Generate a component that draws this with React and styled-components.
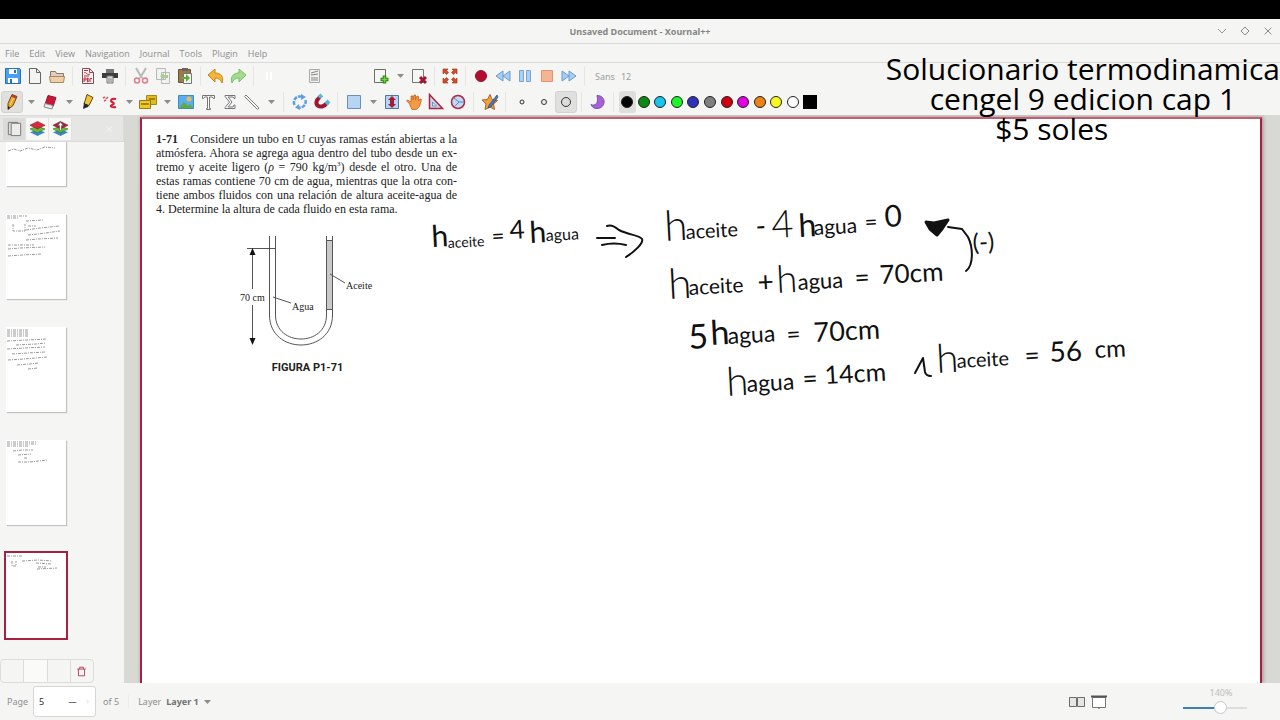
import React from 'react'
import styled, { createGlobalStyle, css } from 'styled-components'

const Chrome = "#f5f5f3";
const Line = "#d9dad8";
const Gutter = "#d8d8d4";
const Accent = "#a8203f";
const Muted = "#8d8f8e";
const Sans = "'Noto Sans', 'Open Sans', sans-serif";
const OpenSans = "'Open Sans', 'Noto Sans', sans-serif";
const Serif = "'Liberation Serif', serif";

const GlobalStyle = createGlobalStyle`
  * {
    box-sizing: border-box;
  }
  body {
    margin: 0;
    background: #000;
    font-family: ${Sans};
  }
  button, input, select {
    font-family: inherit;
    border: 0;
    padding: 0;
    margin: 0;
    background: none;
  }
`

const Window = styled.div`
  position: relative;
  display: flex;
  flex-direction: column;
  height: 100vh;
  padding-top: 19px;
  overflow: hidden;
`

const TitleBar = styled.header`
  display: grid;
  grid-template-columns: 1fr auto 1fr;
  align-items: center;
  height: 25px;
  flex: none;
  background: ${Chrome};
  border-bottom: 1px solid ${Line};
`

const Title = styled.h1`
  grid-column: 2;
  margin: 0;
  font-size: 9px;
  font-weight: 700;
  color: #858786;
`

const WindowButtons = styled.div`
  display: flex;
  justify-content: flex-end;
  gap: 7px;
  padding-right: 4px;
`

const WindowButton = styled.button`
  display: flex;
  align-items: center;
  justify-content: center;
  width: 16px;
  height: 16px;
`

const MenuBar = styled.nav`
  display: flex;
  align-items: center;
  gap: 10px;
  height: 19px;
  flex: none;
  padding-left: 5px;
  background: ${Chrome};
  border-bottom: 1px solid ${Line};
  font-family: ${OpenSans};
`

const MenuItem = styled.button`
  font-size: 9px;
  color: ${Muted};
`

const Toolbar = styled.div`
  display: flex;
  align-items: center;
  height: 26px;
  flex: none;
  padding-left: ${p => p.$start}px;
  background: ${Chrome};
`

const ToolButton = styled.button`
  display: flex;
  align-items: center;
  justify-content: center;
  width: 22px;
  height: 22px;
  border-radius: 3px;
  opacity: ${p => (p.$faded ? 0.65 : 1)};
  ${p => p.$active && css`
    background: #e0e0de;
    border: 1px solid #d2d2d0;
  `}
`

const CaretButton = styled.button`
  display: flex;
  align-items: center;
  justify-content: center;
  width: 16px;
  height: 22px;
`

const Separator = styled.span`
  width: 1px;
  height: 20px;
  margin: 0 ${p => (p.$wide ? 5 : 4)}px 0 4px;
  background: #e6e6e4;
`

const Space = styled.span`
  width: ${p => p.$size}px;
`

const FontButton = styled.button`
  display: flex;
  gap: 6px;
  margin-left: 6px;
  font-size: 9px;
  color: #9b9c9b;
`

const Swatches = styled.div`
  display: grid;
  grid-template-columns: repeat(11, 1fr);
  width: 182px;
`

const Swatch = styled.button`
  display: flex;
  align-items: center;
  justify-content: center;
  height: 22px;
  border-radius: 3px;
  ${p => p.$active && css`
    background: #dededc;
  `}
  &::before {
    content: '';
    width: 10px;
    height: 10px;
    border: 1px solid #222;
    border-radius: 50%;
    background: ${p => p.$color};
  }
`

const CurrentColor = styled.button`
  width: 14px;
  height: 14px;
  margin-left: 2px;
  background: #000;
`

const Main = styled.main`
  display: flex;
  flex: 1;
  min-height: 0;
  background: ${Gutter};
`

const Sidebar = styled.aside`
  display: flex;
  flex-direction: column;
  width: 124px;
  flex: none;
  background: ${Chrome};
`

const SidebarTabs = styled.div`
  display: flex;
  align-items: center;
  height: 27px;
  flex: none;
  padding: 0 8px 0 3px;
  background: #e6e6e4;
  border: 1px solid #dadad8;
  border-left: 0;
`

const SidebarTab = styled.button`
  display: flex;
  align-items: center;
  justify-content: center;
  width: 23px;
  height: 22px;
  background: ${p => (p.$active ? "#dbdbd9" : "#f7f7f6")};
  border-right: 1px solid #e2e2e0;
`

const SidebarClose = styled.button`
  display: flex;
  margin-left: auto;
`

const Thumbs = styled.div`
  display: flex;
  flex-direction: column;
  justify-content: flex-end;
  gap: 28px;
  flex: 1;
  min-height: 0;
  padding: 0 0 21px 6px;
  overflow: hidden;
`

const Thumb = styled.button`
  display: flex;
  flex: none;
  width: 60px;
  height: 85px;
  background: #fff;
  box-shadow: 1px 1px 1px #c2c2c0;
  ${p => p.$active && css`
    box-shadow: 0 0 0 2px ${Accent};
  `}
`

const PageActions = styled.div`
  display: flex;
  width: 94px;
  height: 24px;
  flex: none;
  border: 1px solid #dcdcda;
  border-radius: 4px;
`

const PageAction = styled.button`
  display: flex;
  flex: 1;
  align-items: center;
  justify-content: center;
  background: ${p => (p.$light ? "#fafaf9" : "transparent")};
  & + & {
    border-left: 1px solid #dcdcda;
  }
`

const Canvas = styled.section`
  display: flex;
  flex: 1;
  min-width: 0;
  padding: 2px 18px 0 16px;
  overflow: hidden;
`

const Paper = styled.article`
  position: relative;
  flex: 1;
  padding: 13px 14px 0;
  background: #fff;
  border: 2px solid ${Accent};
  border-top-color: #c0606f;
  border-bottom: 0;
  box-shadow: 1px 0 4px #9a8a8c;
`

const Statement = styled.p`
  width: 301px;
  margin: 0;
  font-family: ${Serif};
  font-size: 12px;
  line-height: 14px;
  color: #222;
`

const StatementLine = styled.span`
  display: block;
  white-space: nowrap;
  text-align-last: ${p => (p.$last ? "left" : "justify")};
`

const Number = styled.b`
  margin-right: 9px;
`

const Cubed = styled.sup`
  font-size: 7px;
  line-height: 0;
`

const Figure = styled.figure`
  display: flex;
  flex-direction: column;
  align-items: center;
  width: 303px;
  margin: 20px 0 0;
`

const Caption = styled.figcaption`
  margin-top: 11px;
  font-family: Roboto, sans-serif;
  font-size: 11px;
  line-height: 14px;
  font-weight: 700;
  color: #222;
`

const Label = styled.text`
  font-family: ${Serif};
  font-size: 10px;
  fill: #222;
`

const InkLayer = styled.svg`
  position: absolute;
  top: 0;
  left: 0;
  overflow: visible;
`

const InkText = styled.text`
  font-family: Lato, sans-serif;
  font-size: ${p => p.$size}px;
  font-weight: ${p => (p.$size > 36 ? 300 : 400)};
  fill: #111;
`

const StatusBar = styled.footer`
  display: flex;
  align-items: center;
  height: 37px;
  flex: none;
  padding: 0 33px 0 7px;
  background: ${Chrome};
  font-size: 9px;
  color: ${Muted};
`

const Spinner = styled.div`
  display: flex;
  align-items: center;
  width: 63px;
  height: 31px;
  margin: 0 7px 0 5px;
  background: #fff;
  border: 1px solid #d6d6d4;
  border-radius: 3px;
`

const SpinnerInput = styled.input`
  width: 31px;
  padding-left: 5px;
  font-size: 9px;
  color: #333;
`

const SpinnerButton = styled.button`
  width: 16px;
  font-size: 8px;
  color: ${p => (p.$faded ? "#e6e6e6" : "#444")};
`

const LayerLabel = styled.label`
  display: flex;
  align-items: center;
  gap: 5px;
  margin-left: 9px;
  padding-left: 9px;
  border-left: 1px solid #ececea;
`

const LayerSelect = styled.select`
  appearance: none;
  font-size: 9px;
  font-weight: 700;
  color: #6f7170;
`

const ViewButtons = styled.div`
  display: flex;
  margin-left: auto;
`

const Zoom = styled.label`
  display: flex;
  flex-direction: column;
  align-items: center;
  width: 64px;
  margin-left: 73px;
  line-height: 12px;
  color: #bcbdbc;
`

const ZoomValue = styled.span`
  padding-left: 12px;
`

const ZoomSlider = styled.input`
  appearance: none;
  width: 100%;
  height: 18px;
  background: linear-gradient(90deg, #3b7fb5 58%, #dededc 58%) center / 100% 2px no-repeat;
  &::-webkit-slider-thumb {
    appearance: none;
    width: 13px;
    height: 13px;
    border: 1px solid #c8c8c6;
    border-radius: 50%;
    background: #fff;
  }
`

const Banner = styled.div`
  position: absolute;
  top: 54px;
  right: 0;
  display: flex;
  flex-direction: column;
  align-items: center;
  font-family: ${OpenSans};
  font-size: 30px;
  line-height: 30px;
  color: #000;
  white-space: pre;
`

const Icon = ({ size = 18, children }) => (
  <svg width={size} height={size} viewBox="0 0 18 18" fill="none" aria-hidden="true">{children}</svg>
)

const Caret = () => (
  <svg width="7" height="4" viewBox="0 0 7 4" aria-hidden="true"><path d="M0 0h7L3.500 4z" fill="#8a8c8b" /></svg>
)

const Sheet = ({ stroke = "#666" }) => (
  <path d="M3.500 1.500h7l4 4v11h-11zM10.500 1.500v4h4" fill="#f3f3f1" stroke={stroke} />
)

const icons = {
  save: <><path d="M1.500 1.500h14l1 1v14h-15z" fill="#4aa0ee" stroke="#2270bd" /><path d="M5 2h8v5H5zM4 11h10v5H4z" fill="#fff" /><path d="M10 3h2v3h-2zM6 12h2v4H6z" fill="#2b70b0" /></>,
  file: <Sheet />,
  open: <><path d="M2.500 15V4.500h5l1 2h7V9" fill="#d8d0c6" stroke="#92755a" /><path d="M1.500 9.500h15l-1 6h-13z" fill="#efcfa8" stroke="#a78864" /></>,
  pdf: <><Sheet stroke="#8a4a52" /><path d="M5 3.500h4M5 6c2-2 3 3 6 1M5 9h5" stroke="#c52e42" /><path d="M5 15v-4h2v2H5M8.500 15v-4c2 0 2 4 0 4M13 11.500h-2V15" stroke="#c52e42" /></>,
  print: <><path d="M5 2h8v4H5z" fill="#777" /><path d="M1 6h16v5H1z" fill="#3d3d3d" /><path d="M6 9h6v7H6z" fill="#ddd" stroke="#777" /><path d="M7 12h4M7 14h4" stroke="#888" /></>,
  cut: <><path d="M4 1l6 10M14 1L8 11" stroke="#999" strokeWidth="2" /><circle cx="5" cy="13.500" r="2.500" stroke="#d0405a" strokeWidth="1.500" /><circle cx="13" cy="13.500" r="2.500" stroke="#d0405a" strokeWidth="1.500" /></>,
  copy: <><path d="M2.500 1.500h9v11h-9zM7.500 5.500h8v11h-8z" fill="#f0f3ec" stroke="#999" /><path d="M6 9l4-3v2h4v3h-4v2z" fill="#7cb862" /></>,
  paste: <><path d="M2.500 2.500h12v13h-12z" fill="#9c7a48" stroke="#6e5130" /><path d="M6 1h6v3H6z" fill="#666" /><path d="M7.500 6.500h8v10h-8z" fill="#f2f5ee" stroke="#777" /><path d="M5 10h5V7l4 4-4 4v-3H5z" fill="#5cae3a" /></>,
  undo: <path d="M1 8l7-6v4c6 0 9 4 7 10-1-3-3-5-7-5v4z" fill="#f4b53b" stroke="#c58716" />,
  redo: <path d="M17 8l-7-6v4C4 6 1 10 3 16c1-3 3-5 7-5v4z" fill="#a3dc91" stroke="#78bf65" />,
  layout: <><path d="M4.500 2.500h10v13h-10z" fill="#f0f0ee" stroke="#aaa" /><path d="M6 6l7-2M6 8l7-1M6 11h7M6 13h7" stroke="#888" /></>,
  pause: <path d="M6 5h2v8H6zM10 5h2v8h-2z" fill="#fff" />,
  addPage: <><path d="M2.500 2.500h11v13h-11z" fill="#f5f7f2" stroke="#6c6c6c" /><path d="M12.500 8.500v8M8.500 12.500h8" stroke="#2d7d13" strokeWidth="3.500" /><path d="M12.500 9.500v6M9.500 12.500h6" stroke="#79d443" strokeWidth="1.500" /></>,
  dropPage: <><path d="M2.500 2.500h11v13h-11z" fill="#f5f7f2" stroke="#777" /><path d="M10 10l6 6m0-6l-6 6" stroke="#a11432" strokeWidth="3" /></>,
  fullscreen: <><path d="M2 2h5L5.500 3.500l2 2-2 2-2-2L2 7zM16 2h-5l1.500 1.500-2 2 2 2 2-2L16 7zM2 16h5l-1.500-1.500 2-2-2-2-2 2L2 11zM16 16h-5l1.500-1.500-2-2 2-2 2 2L16 11z" fill="#d74b22" stroke="#9a2c1a" strokeWidth=".6" /></>,
  record: <circle cx="9" cy="9" r="5.500" fill="#b50e2c" stroke="#8b1530" />,
  rewind: <path d="M9 4v10L2 9zM16 4v10L9 9z" fill="#a9ccf2" stroke="#6799cf" />,
  pauseBlue: <path d="M3.500 3.500h4v11h-4zM10.500 3.500h4v11h-4z" fill="#acd0f4" stroke="#75a4d5" />,
  stop: <path d="M3.500 3.500h11v11h-11z" fill="#f5b494" stroke="#df956e" />,
  forward: <path d="M2 4v10l7-5zM9 4v10l7-5z" fill="#a9ccf2" stroke="#6799cf" />,
  pencil: <><path d="M9 1.500l5 2-4 9-5 4v-6z" fill="#efa629" stroke="#774319" /><path d="M9 1.500l5 2-1.500 2-4.500-2z" fill="#b43d3d" /><path d="M10.500 5L7 12" stroke="#ffd96a" /><path d="M5 13l2 1.500-2 2z" fill="#222" /></>,
  eraser: <><path d="M7 2.500l8 2-3 9-8-2z" fill="#ca1735" stroke="#8c1730" /><path d="M4 10.500l8 2-1 3.500-8-2z" fill="#ececec" stroke="#888" /></>,
  marker: <><path d="M8 1.500l6 3-4 8-5-1.500z" fill="#efc33a" stroke="#5e4b16" /><path d="M5 10l5 2.500-1 1.500-5 2z" fill="#292929" /></>,
  laser: <><path d="M2 5l2-1M5 6l2-2M3 8l2-1" stroke="#dc5262" strokeWidth="1.500" /><path d="M15 6c-5-1-6 2-4 3s3 2 0 3 0 3 4 2" stroke="#d71c36" strokeWidth="2" /></>,
  plugin: <><path d="M7.500 2.500h10v9h-10z" fill="#e3ba1c" stroke="#a78a16" /><path d="M.5 7.500h11v8H.5z" fill="#efca25" stroke="#927b1e" /><path d="M2 11h8M10 6h6" stroke="#8a7014" strokeWidth="1.500" /></>,
  image: <><path d="M1.500 2.500h15v13h-15z" fill="#57aff0" stroke="#378dcc" /><path d="M2 15l5-6 4 4 2-2 3 4z" fill="#64a940" /><circle cx="12" cy="6" r="2.500" fill="#e9bc56" /></>,
  text: <path d="M3.500 2.500h12v3h-1l-1-1.500h-3v11.500h1v1h-4v-1h1V4h-3l-1 1.500h-1z" fill="#fff" stroke="#777" />,
  sigma: <path d="M4 2.500h10v3h-1L12 4H7l4 5-4 5h5l1-2h1v3.500H4v-1L8.500 9 4 3.500z" fill="#fff" stroke="#777" />,
  line: <path d="M3 2l13 13-1.500 1.500-13-13z" fill="#fff" stroke="#777" />,
  rotate: <><path d="M3.500 12A6 6 0 0 1 10 3.500M14.500 7a6 6 0 0 1-7 7.500" stroke="#5ba0e6" strokeWidth="2.500" strokeDasharray="4 1" /><path d="M10 1l5 3-5 3zM8 11l-4 3.500 5 2.500z" fill="#5ba0e6" /></>,
  magnet: <><path d="M7 4C-2 11 8 18 14 10" stroke="#9d1832" strokeWidth="4" /><path d="M6 4.500l3-2.500M13 11l3-3" stroke="#56b6df" strokeWidth="4" /></>,
  rect: <path d="M2.500 2.500h13v13h-13z" fill="#b7d4f3" stroke="#688fbd" />,
  vertical: <><path d="M2.500 2.500h13v13h-13z" fill="#b7d4f3" stroke="#53779e" /><path d="M9 3l4 4h-2v4h2l-4 4-4-4h2V7H5z" fill="#a51c37" /></>,
  hand: <path d="M4 10L1.500 8l1-1L6 9V3h2v4l1-5h1.500v5L12 3l1.500.5V8L15 6l1.500.5-2 7-3 3H7z" fill="#f39a47" stroke="#bd631f" strokeWidth=".8" />,
  setsquare: <><path d="M2.500 1.500l13 14h-13z" fill="#c2daf1" stroke="#ad2440" strokeWidth="1.500" /><path d="M5.500 9l4 4h-4z" fill="#fff" stroke="#668db4" /></>,
  compass: <><circle cx="9" cy="9" r="6.500" fill="#c0daf5" stroke="#b42542" strokeWidth="1.500" /><path d="M5 5l5 4H15M10 9l-4 4" stroke="#5c87ba" /></>,
  star: <><path d="M9 1.500l2 5 5.500 1-4 3.500 1 5.500L9 14l-5 2.500 1-5.500-4-4 5.500-.5z" fill="#f5a03c" stroke="#a96520" /><path d="M16 2L8 12l-1 3 3-1 7-10z" fill="#4478b8" stroke="#344e75" strokeWidth=".7" /></>,
  thin: <circle cx="9" cy="9" r="2" fill="#eee" stroke="#333" />,
  medium: <circle cx="9" cy="9" r="2.500" fill="#eee" stroke="#333" />,
  thick: <circle cx="9" cy="9" r="4.500" fill="#ddd" stroke="#333" />,
  fill: <path d="M8 2.500c10 0 9 13 0 13-4 0-5-2-6-4 4 2 8-1 6-9z" fill="#a75fdc" stroke="#7753a5" />,
  pages: <><path d="M2.500 2.500h10v13h-10z" fill="#ddd" stroke="#777" /><path d="M5.500 3.500h10v13h-10z" fill="#ececea" stroke="#777" /></>,
  layers: <><path d="M1 13l8-3 8 3-8 4z" fill="#3d86c6" /><path d="M1 9.500l8-3 8 3-8 4z" fill="#65bd36" stroke="#2a6d25" strokeWidth=".6" /><path d="M1 5.500l8-4 8 4-8 4z" fill="#d32d3b" stroke="#8c1932" strokeWidth=".6" /></>,
  layersUp: <><path d="M1 13l8-3 8 3-8 4z" fill="#3d86c6" /><path d="M1 9.500l8-3 8 3-8 4z" fill="#65bd36" stroke="#2a6d25" strokeWidth=".6" /><path d="M1 5.500l8-4 8 4-8 4z" fill="#a72738" stroke="#8c1932" strokeWidth=".6" /><path d="M9 2l3 4h-2v5H8V6H6z" fill="#fff" stroke="#444" strokeWidth=".6" /></>,
  trash: <path d="M2 5h14M6 5V2h6v3M4 5v11h10V5" stroke="#b03a55" strokeWidth="1.500" />,
  pair: <path d="M1.500 4.500h7v9h-7zM9.500 4.500h7v9h-7z" fill="#e6e6e4" stroke="#6b6b6b" />,
  present: <><path d="M2.500 4.500h13v10h-13z" fill="#fff" stroke="#777" /><path d="M1 2.500h16v2H1z" fill="#555" /><path d="M8 15h2v1H8z" fill="#999" /></>,
}

const fileTools = [
  "save", "file", "open", "|", "pdf", "print", "|", "cut", "copy", "paste", "|", "undo", "redo", "|",
  "pause", 23, "layout", 45, "addPage", "v", "dropPage", "|", "fullscreen", "|",
  "record", "rewind", "pauseBlue", "stop", "forward", "|",
]

const penTools = [
  "pencil*", "v", "eraser", "v", "marker", "laser", "v", "plugin", "v", "image", "text", "sigma", "line", "v", "|",
  "rotate", "magnet", "|", "rect", "v", "vertical", "hand", "setsquare", "compass", "|", "star", "|",
  "thin", "medium", "thick*", "|", "fill", "|",
]

const colors = ["#000", "#0c8a14", "#17c5ed", "#1cf52a", "#3030b8", "#808080", "#cf0010", "#e000e0", "#ef8216", "#f8f820", "#fff"]

// [x, baseline, size, text] of each written word on the sheet
const ink = [
  [290, 128, 30, "h"], [306, 129, 14, "aceite"], [350, 125, 22, "="], [368, 120, 26, "4"], [388, 124, 30, "h"], [404, 122, 16, "agua"],
  [523, 122, 42, "h"], [544, 120, 20, "aceite"], [614, 117, 28, "-"], [630, 119, 38, "4"], [657, 118, 32, "h"], [672, 116, 21, "agua"], [723, 111, 22, "="], [743, 108, 30, "0"],
  [527, 180, 42, "h"], [547, 176, 21, "aceite"], [616, 173, 28, "+"], [635, 174, 38, "h"], [656, 171, 22, "agua"], [713, 168, 26, "="], [738, 165, 26, "70cm"],
  [547, 230, 34, "5"], [569, 226, 34, "h"], [586, 225, 23, "agua"], [645, 224, 24, "="], [672, 223, 27, "70cm"],
  [585, 277, 40, "h"], [605, 273, 23, "agua"], [661, 269, 26, "="], [683, 265, 25, "14cm"],
  [795, 254, 40, "h"], [815, 249, 20, "aceite"], [883, 246, 26, "="], [908, 243, 28, "56"], [953, 239, 24, "cm"],
  [831, 132, 24, "(-)"],
]

const thumbScribbles = [
  "M2 50l6-2 6 2 8-3 9 2 8-3 10 1",
  "M1 2h20M1 4h12M20 7l18 -1M22 12h8M7 10v7h12v-7M20 16l14-2 20-2M22 21l10-1 22-3M20 26l12-1 20-1M2 31h26M2 35l12-1 25-1M2 42l14-1 19-1",
  "M1 3h22M1 5h22M1 7h22M1 9h22M1 14l20-1 20-1M10 18l20-1 10-1M1 22l18-1 20-1M6 27l16-1 17-1M2 33l16-1 23-2M11 38l12-1 10-1M22 42l10-1",
  "M1 2h29M1 4h29M1 6h22M7 11l10-1 10 0M12 15l13-1M18 18h4M12 22l12 0 18-2",
  "M1 3h16M6 8v5h4v-5M16 8l16-1 14 1M30 10l15 1M32 14h8M31 16l20-1",
]

const Tools = ({ items, wide }) => items.map((item, i) => {
  if (item === "|") return <Separator key={i} $wide={wide} />
  if (item === "v") return <CaretButton key={i} aria-label="More"><Caret /></CaretButton>
  if (typeof item === "number") return <Space key={i} $size={item} />
  const name = item.replace("*", "")
  return (
    <ToolButton key={i} aria-label={name} $active={item !== name} $faded={name === "copy" || name === "cut"}>
      <Icon>{icons[name]}</Icon>
    </ToolButton>
  )
})

const TubeFigure = () => (
  <Figure>
    <svg width="136" height="114" viewBox="0 0 136 114" fill="none" stroke="#555">
      <path d="M29.500 0v79c0 40 63 40 63 0V0M35.500 0v79c0 32 51 32 51 0V0" />
      <path d="M86.500 4.500h6v69h-6z" fill="#c9c9c9" />
      <path d="M7 12.500h28M12.500 16v37M12.500 69v37M33 61l18 6M90 38l15 9" />
      <path d="M12.500 12l-3 7h6zM12.500 109l-3-7h6z" fill="#111" stroke="none" />
      <g stroke="none">
        <Label x="0" y="65">70 cm</Label>
        <Label x="52" y="74">Agua</Label>
        <Label x="106" y="53">Aceite</Label>
      </g>
    </svg>
    <Caption>FIGURA P1-71</Caption>
  </Figure>
)

export default function App() {
  return (
    <Window>
      <GlobalStyle />
      <TitleBar>
        <Title>Unsaved Document - Xournal++</Title>
        <WindowButtons>
          <WindowButton aria-label="Minimize"><Icon size={12}><path d="M3 6l6 6 6-6" stroke="#999" strokeWidth="1.500" /></Icon></WindowButton>
          <WindowButton aria-label="Maximize"><Icon size={12}><path d="M9 3l6 6-6 6-6-6z" stroke="#888" strokeWidth="1.500" /></Icon></WindowButton>
          <WindowButton aria-label="Close"><Icon size={12}><path d="M4 4l10 10M14 4L4 14" stroke="#888" strokeWidth="1.500" /></Icon></WindowButton>
        </WindowButtons>
      </TitleBar>
      <MenuBar>
        {["File", "Edit", "View", "Navigation", "Journal", "Tools", "Plugin", "Help"].map(m => <MenuItem key={m}>{m}</MenuItem>)}
      </MenuBar>
      <Toolbar $start={2}>
        <Tools items={fileTools} />
        <FontButton><span>Sans</span><span>12</span></FontButton>
      </Toolbar>
      <Toolbar $start={1}>
        <Tools items={penTools} wide />
        <Swatches>
          {colors.map((c, i) => <Swatch key={c} $color={c} $active={i === 0} aria-label={c} />)}
        </Swatches>
        <CurrentColor aria-label="Select color" />
      </Toolbar>
      <Main>
        <Sidebar>
          <SidebarTabs>
            <SidebarTab $active aria-label="Pages"><Icon size={17}>{icons.pages}</Icon></SidebarTab>
            <SidebarTab aria-label="Layers"><Icon size={17}>{icons.layers}</Icon></SidebarTab>
            <SidebarTab aria-label="Layer stack"><Icon size={17}>{icons.layersUp}</Icon></SidebarTab>
            <SidebarClose aria-label="Close sidebar"><Icon size={12}><path d="M4 4l10 10M14 4L4 14" stroke="#f4f4f4" strokeWidth="1.500" /></Icon></SidebarClose>
          </SidebarTabs>
          <Thumbs>
            {thumbScribbles.map((d, i) => (
              <Thumb key={d} $active={i === 4} aria-label={`Page ${i + 1}`}>
                <svg width="60" height="85" fill="none"><path d={d} stroke="#999" strokeDasharray="3 1 1 1" /></svg>
              </Thumb>
            ))}
          </Thumbs>
          <PageActions>
            <PageAction aria-label="Move up" />
            <PageAction $light aria-label="Move down" />
            <PageAction aria-label="Duplicate" />
            <PageAction aria-label="Delete"><Icon size={11}>{icons.trash}</Icon></PageAction>
          </PageActions>
        </Sidebar>
        <Canvas>
          <Paper>
            <Statement>
              <StatementLine><Number>1-71</Number> Considere un tubo en U cuyas ramas están abiertas a la</StatementLine>
              <StatementLine>atmósfera. Ahora se agrega agua dentro del tubo desde un ex-</StatementLine>
              <StatementLine>tremo y aceite ligero (<i>ρ</i> = 790 kg/m<Cubed>3</Cubed>) desde el otro. Una de</StatementLine>
              <StatementLine>estas ramas contiene 70 cm de agua, mientras que la otra con-</StatementLine>
              <StatementLine>tiene ambos fluidos con una relación de altura aceite-agua de</StatementLine>
              <StatementLine $last>4. Determine la altura de cada fluido en esta rama.</StatementLine>
            </Statement>
            <TubeFigure />
            <InkLayer width="1000" height="300" fill="none" stroke="#111" strokeWidth="2" strokeLinecap="round" strokeLinejoin="round">
              <g stroke="none">
                {ink.map(([x, y, size, word]) => (
                  <InkText key={`${x}-${y}`} x={x} y={y} $size={size} transform={`rotate(-3 ${x} ${y})`}>{word}</InkText>
                ))}
              </g>
              <path d="M455 119h18M460 126q12-3 24 0M465 107q5-2 12 4c10 5 20 5 23 9 2 4-8 13-16 18" />
              <path d="M784 103l8 1 14-3-6 9-5 6-7-6z" fill="#111" strokeWidth="3" />
              <path d="M806 108l14 2 6 8c5 10 6 28-2 34" />
              <path d="M773 254l8-15 2 14q1 4 6 4" />
            </InkLayer>
          </Paper>
        </Canvas>
      </Main>
      <StatusBar>
        <label htmlFor="page">Page</label>
        <Spinner>
          <SpinnerInput id="page" defaultValue="5" />
          <SpinnerButton aria-label="Previous page">—</SpinnerButton>
          <SpinnerButton $faded aria-label="Next page">+</SpinnerButton>
        </Spinner>
        <span>of 5</span>
        <LayerLabel>
          Layer
          <LayerSelect defaultValue="1"><option value="1">Layer 1</option></LayerSelect>
          <Caret />
        </LayerLabel>
        <ViewButtons>
          <ToolButton aria-label="Paired pages"><Icon>{icons.pair}</Icon></ToolButton>
          <ToolButton aria-label="Presentation mode"><Icon>{icons.present}</Icon></ToolButton>
        </ViewButtons>
        <Zoom>
          <ZoomValue>140%</ZoomValue>
          <ZoomSlider type="range" min="0" max="100" defaultValue="60" />
        </Zoom>
      </StatusBar>
      <Banner>
        <span>Solucionario termodinamica</span>
        <span>cengel 9 edicion cap 1</span>
        <span>{"$5 soles        "}</span>
      </Banner>
    </Window>
  )
}
